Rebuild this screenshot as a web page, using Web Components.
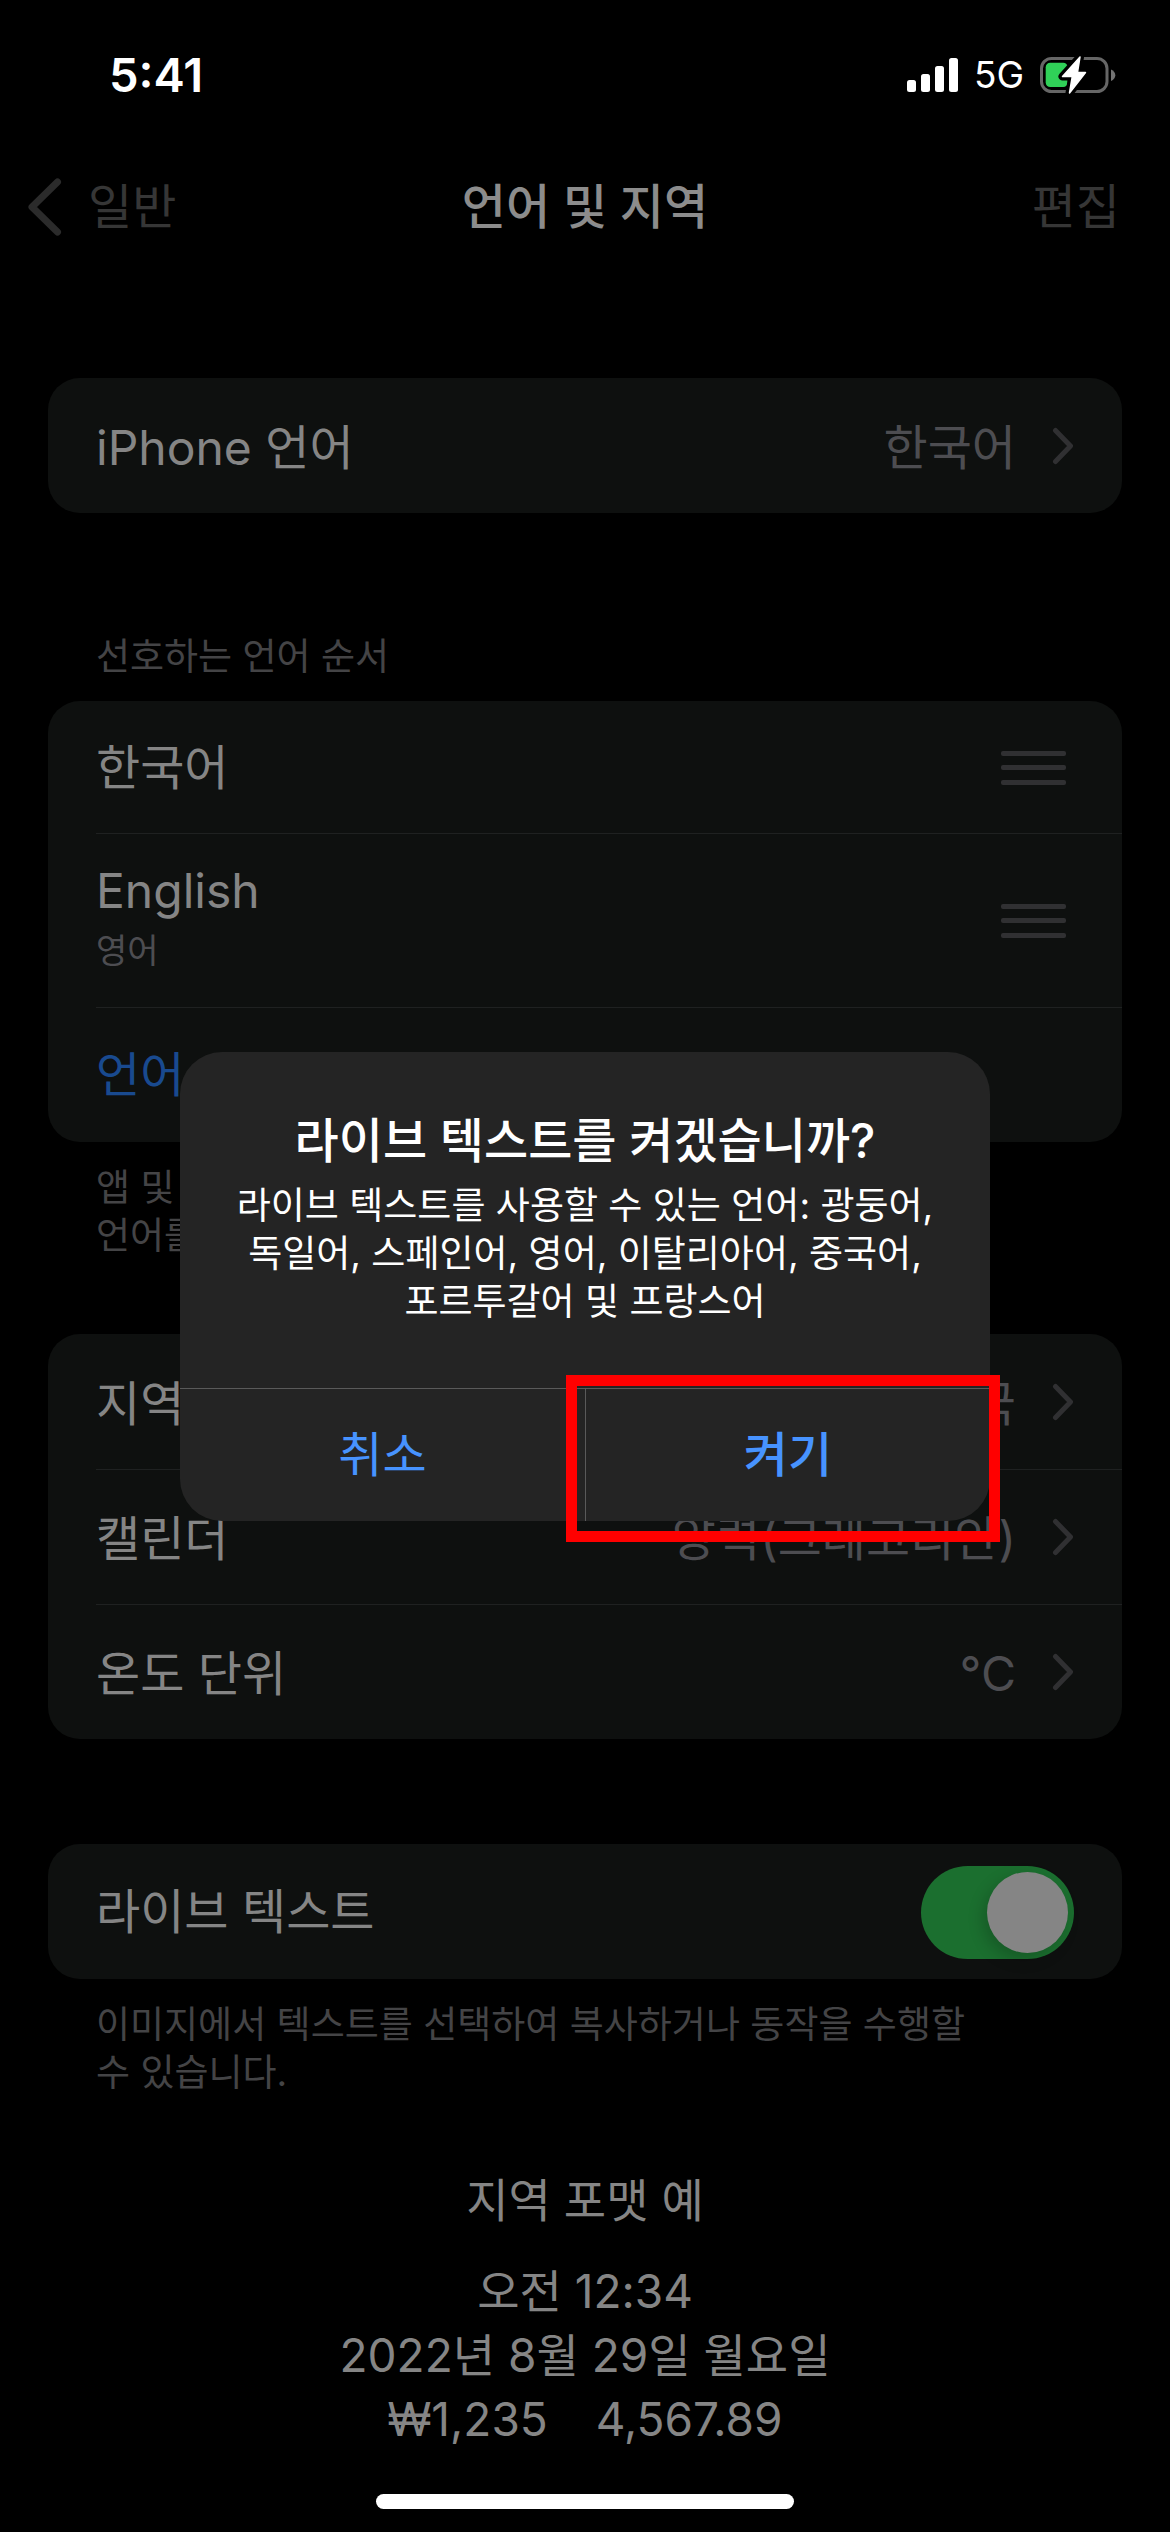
<!DOCTYPE html>
<html lang="ko">
<head>
<meta charset="utf-8">
<meta name="viewport" content="width=device-width, initial-scale=1">
<title>언어 및 지역</title>
<style>
  html, body { margin: 0; background: #000; }
  body {
    font-family: Inter, "Noto Sans CJK KR", sans-serif;
    font-size: 48px;
    line-height: 64px;
    color: #858585;
    word-break: keep-all;
  }
</style>
</head>
<body>
<settings-screen>
  <status-bar slot="status" time="5:41" network="5G"></status-bar>
  <nav-bar slot="nav" back="일반" action="편집">언어 및 지역</nav-bar>

  <settings-group>
    <link-row value="한국어">iPhone 언어</link-row>
  </settings-group>

  <settings-group class="languages">
    <span slot="header">선호하는 언어 순서</span>
    <language-row>한국어</language-row>
    <language-row detail="영어">English</language-row>
    <add-row>언어</add-row>
    <span slot="footer">앱 및<br>언어를</span>
  </settings-group>

  <settings-group>
    <link-row value="대한민국">지역</link-row>
    <link-row value="양력(그레고리안)">캘린더</link-row>
    <link-row value="°C">온도 단위</link-row>
  </settings-group>

  <settings-group>
    <toggle-row checked>라이브 텍스트</toggle-row>
    <span slot="footer">이미지에서 텍스트를 선택하여 복사하거나 동작을 수행할<br>수 있습니다.</span>
  </settings-group>

  <format-sample heading="지역 포맷 예">
    <span>오전 12:34</span>
    <span>2022년 8월 29일 월요일</span>
    <span slot="currency">₩1,235</span>
    <span slot="number">4,567.89</span>
  </format-sample>

  <alert-dialog slot="alert" heading="라이브 텍스트를 켜겠습니까?" cancel="취소" confirm="켜기">라이브 텍스트를 사용할 수 있는 언어: 광둥어, 독일어, 스페인어, 영어, 이탈리아어, 중국어, 포르투갈어 및 프랑스어</alert-dialog>
</settings-screen>

<script>
  const CHEVRON = `<svg class="chevron" width="22" height="38" viewBox="0 0 22 38" fill="none" stroke="#303032" stroke-width="5" stroke-linecap="round" stroke-linejoin="round" aria-hidden="true"><path d="M3.500 3.500 18.500 19 3.500 34.500"/></svg>`;

  class BaseElement extends HTMLElement {
    connectedCallback() {
      if (this.shadowRoot) return;
      this.attachShadow({ mode: 'open' }).innerHTML =
        `<style>*{box-sizing:border-box}a{color:inherit;text-decoration:none}button{font:inherit;color:inherit;background:none;border:0;padding:0;margin:0}svg{display:block;flex:none}</style>` + this.render();
    }
    attr(name) { return this.getAttribute(name) || ''; }
  }

  customElements.define('settings-screen', class extends BaseElement {
    render() {
      return `<style>
        :host { display: flex; flex-direction: column; min-height: 100vh; position: relative; }
        main { display: flex; flex-direction: column; gap: 105px; padding: 105px 48px 43px; }
        .home { width: 418px; height: 15px; border-radius: 8px; background: #fff; margin: auto auto 24px; }
      </style>
      <slot name="status"></slot>
      <slot name="nav"></slot>
      <main><slot></slot></main>
      <div class="home"></div>
      <slot name="alert"></slot>`;
    }
  });

  customElements.define('status-bar', class extends BaseElement {
    render() {
      return `<style>
        :host { display: flex; justify-content: space-between; align-items: center; padding: 43px 54px 34px 109px; color: #fff; }
        .time { font-size: 47px; font-weight: 600; }
        .right { display: flex; align-items: center; gap: 16px; }
        .net { font-size: 37px; }
      </style>
      <span class="time">${this.attr('time')}</span>
      <div class="right">
        <svg width="51" height="36" viewBox="0 0 51 36" fill="#fff" aria-hidden="true">
          <rect x="0" y="23" width="9" height="12" rx="2.500"/><rect x="14" y="17" width="9" height="18" rx="2.500"/>
          <rect x="28" y="9" width="9" height="26" rx="2.500"/><rect x="42" y="1" width="9" height="34" rx="2.500"/>
        </svg>
        <span class="net">${this.attr('network')}</span>
        <svg width="76" height="40" viewBox="0 0 76 40" aria-hidden="true">
          <rect x="1.500" y="3.500" width="65.500" height="33" rx="10" fill="none" stroke="#666" stroke-width="3"/>
          <path d="M71 14.500Q75.300 16.500 75.300 20.300T71 26Z" fill="#737373"/>
          <rect x="5.700" y="7.700" width="22" height="24.300" rx="4.500" fill="#30d158"/>
          <path d="M40 2 22.500 21.500H32.300L29.500 38 45.500 17.500H37.500Z" fill="#000" stroke="#000" stroke-width="8" stroke-linejoin="round"/>
          <path d="M40 2 22.500 21.500H32.300L29.500 38 45.500 17.500H37.500Z" fill="#fff" stroke="#fff" stroke-width="1.500" stroke-linejoin="round"/>
        </svg>
      </div>`;
    }
  });

  customElements.define('nav-bar', class extends BaseElement {
    render() {
      return `<style>
        :host { display: grid; grid-template-columns: 1fr auto 1fr; align-items: center; height: 132px; padding: 0 26px; }
        h1 { margin: 0; font-size: inherit; font-weight: 500; color: #8c8c8c; }
        a { display: flex; align-items: center; gap: 24px; color: #363636; }
        button { justify-self: end; padding-right: 24px; color: #363636; }
      </style>
      <a href="#general"><svg width="38" height="60" viewBox="0 0 38 60" fill="none" stroke="#2b2b2b" stroke-width="7" stroke-linecap="round" stroke-linejoin="round" aria-hidden="true"><path d="M31.500 5 6 30 31.500 55"/></svg>${this.attr('back')}</a>
      <h1><slot></slot></h1>
      <button type="button">${this.attr('action')}</button>`;
    }
  });

  customElements.define('settings-group', class extends BaseElement {
    render() {
      const has = n => this.querySelector(`[slot=${n}]`);
      return `<style>
        :host { display: block; }
        :host(.languages) { margin: 15px 0 -31px; }
        .card { background: #0e100f; border-radius: 32px; overflow: hidden; }
        .note { font-size: 37px; line-height: 48px; padding: 0 48px; color: #444446; }
        .head { margin-bottom: 20px; }
        .foot { margin-top: 22px; }
      </style>
      ${has('header') ? '<div class="note head"><slot name="header"></slot></div>' : ''}
      <div class="card"><slot></slot></div>
      ${has('footer') ? '<div class="note foot"><slot name="footer"></slot></div>' : ''}`;
    }
    connectedCallback() {
      super.connectedCallback();
      [...this.children].filter(c => !c.slot).slice(1).forEach(c => c.classList.add('ruled'));
    }
  });

  /* Shared geometry of every list row; a ruled row has a hairline above its text column. */
  const ROW = `
    :host { display: block; padding-left: 48px; }
    .row { display: flex; align-items: center; justify-content: space-between; width: 100%; min-height: 135px; padding: 4px 48px 0 0; border-top: 1px solid transparent; }
    :host(.ruled) .row { border-top-color: #1f2121; }`;

  customElements.define('link-row', class extends BaseElement {
    render() {
      return `<style>${ROW}
        .end { display: flex; align-items: center; gap: 36px; color: #4d4d51; }
        .chevron { margin-bottom: 4px; }
      </style>
      <a class="row" href="#detail"><span><slot></slot></span><span class="end">${this.attr('value')}${CHEVRON}</span></a>`;
    }
  });

  customElements.define('language-row', class extends BaseElement {
    render() {
      const detail = this.attr('detail');
      return `<style>${ROW}
        .row { min-height: ${detail ? 174 : 132}px; padding: 0 56px 0 0; }
        .text { display: flex; flex-direction: column; padding-bottom: ${detail ? 4 : 0}px; }
        small { font-size: 34px; line-height: 56px; color: #4d4d51; }
      </style>
      <div class="row"><span class="text"><slot></slot>${detail ? `<small>${detail}</small>` : ''}</span>
        <button type="button" aria-label="순서 변경"><svg width="65" height="34" viewBox="0 0 65 34" fill="#303032" aria-hidden="true"><rect width="65" height="5" y="0" rx="2"/><rect width="65" height="5" y="14" rx="2"/><rect width="65" height="5" y="29" rx="2"/></svg></button></div>`;
    }
  });

  customElements.define('add-row', class extends BaseElement {
    render() {
      return `<style>${ROW} .row { padding-top: 0; color: #194a8f; }</style>
      <button type="button" class="row"><slot></slot></button>`;
    }
  });

  customElements.define('toggle-row', class extends BaseElement {
    render() {
      return `<style>${ROW}
        .row { padding-top: 0; }
        input { appearance: none; flex: none; display: flex; width: 153px; height: 93px; margin: 0; padding: 6px; border-radius: 47px; background: #39393d; }
        input::before { content: ""; width: 81px; height: 81px; border-radius: 50%; background: #858585; box-shadow: -4px 6px 16px rgba(0,0,0,.2); }
        input:checked { justify-content: flex-end; background: #1b6f2f; }
      </style>
      <label class="row"><span><slot></slot></span><input type="checkbox" role="switch" ${this.hasAttribute('checked') ? 'checked' : ''}></label>`;
    }
  });

  customElements.define('format-sample', class extends BaseElement {
    render() {
      return `<style>
        :host { display: flex; flex-direction: column; align-items: center; margin-top: -34px; font-size: 46px; }
        h2 { margin: 0 0 27px; font-size: inherit; font-weight: 400; }
        .numbers { display: flex; gap: 48px; }
      </style>
      <h2>${this.attr('heading')}</h2>
      <slot></slot>
      <div class="numbers"><slot name="currency"></slot><slot name="number"></slot></div>`;
    }
  });

  customElements.define('alert-dialog', class extends BaseElement {
    render() {
      return `<style>
        :host { position: absolute; inset: 0; display: flex; align-items: center; justify-content: center; padding: 141px 0 102px; }
        section { width: 810px; border-radius: 42px; background: #242424; color: #fff; }
        .body { padding: 57px 48px 62px; text-align: center; }
        h2 { margin: 0; font-size: inherit; font-weight: 500; }
        p { margin: 9px 0 0; font-size: 37px; line-height: 48px; }
        .actions { display: grid; grid-template-columns: 1fr 1fr; border-top: 1px solid #5a5a5a; color: #4793ff; }
        button { height: 132px; }
        .confirm { position: relative; font-weight: 500; border-left: 1px solid #5a5a5a; }
        .confirm::after { content: ""; position: absolute; inset: -14px -10px -21px -20px; border: 11px solid #f00; }
      </style>
      <section role="alertdialog" aria-labelledby="t" aria-describedby="m">
        <div class="body"><h2 id="t">${this.attr('heading')}</h2><p id="m"><slot></slot></p></div>
        <div class="actions"><button type="button">${this.attr('cancel')}</button><button type="button" class="confirm">${this.attr('confirm')}</button></div>
      </section>`;
    }
  });
</script>
</body>
</html>
